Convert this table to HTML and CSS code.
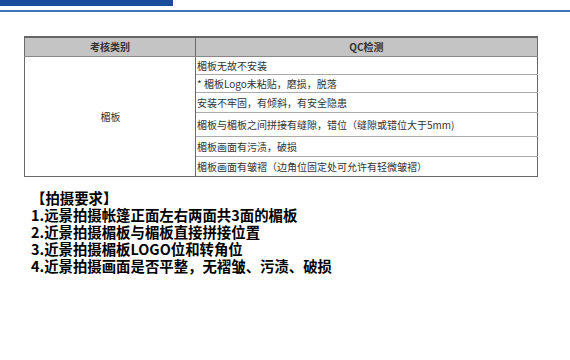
FILE: index.html
```html
<!DOCTYPE html>
<html lang="zh">
<head>
<meta charset="utf-8">
<link rel="stylesheet" href="styles.css">
</head>
<body>
<div class="top">
  <div class="bar"></div>
</div>
<div class="rule"></div>
<table class="qc">
  <thead>
    <tr><th class="c1">考核类别</th><th class="c2">QC检测</th></tr>
  </thead>
  <tbody>
    <tr class="r1"><td class="cat" rowspan="6">楣板</td><td>楣板无故不安装</td></tr>
    <tr class="r2"><td>* 楣板Logo未粘贴，磨损，脱落</td></tr>
    <tr class="r3"><td>安装不牢固，有倾斜，有安全隐患</td></tr>
    <tr class="r4"><td>楣板与楣板之间拼接有缝隙，错位（缝隙或错位大于5mm)</td></tr>
    <tr class="r5"><td>楣板画面有污渍，破损</td></tr>
    <tr class="r6"><td>楣板画面有皱褶（边角位固定处可允许有轻微皱褶）</td></tr>
  </tbody>
</table>
<div class="req">
  <p class="head">【拍摄要求】</p>
  <p>1.远景拍摄帐篷正面左右两面共3面的楣板</p>
  <p>2.近景拍摄楣板与楣板直接拼接位置</p>
  <p>3.近景拍摄楣板LOGO位和转角位</p>
  <p>4.近景拍摄画面是否平整，无褶皱、污渍、破损</p>
</div>
</body>
</html>
```
FILE: styles.css
```css
html, body {
  margin: 0;
  padding: 0;
  background: #fff;
  width: 570px;
  height: 360px;
  overflow: hidden;
  font-family: "Noto Sans CJK SC", "Noto Sans", sans-serif;
}
.top {
  height: 10px;
}
.bar {
  width: 173px;
  height: 6px;
  background: #1b4d9c;
}
.rule {
  height: 2px;
  background: #3f76b8;
}
.qc {
  margin: 24px 0 0 24px;
  width: 514px;
  border-collapse: collapse;
  border: 1px solid #6a6a6a;
  font-size: 10px;
  color: #333;
}
.qc th {
  height: 18px;
  padding: 0;
  background: #c4c4c4;
  border-top: 2px solid #666;
  border-bottom: 1px solid #888;
  font-weight: bold;
  color: #333;
  line-height: 18px;
}
.qc th.c1 {
  width: 170px;
  border-right: 1px solid #6a6a6a;
}
.qc td {
  padding: 0 0 0 1px;
  border-bottom: 1px solid #aaa;
  line-height: 14px;
  text-align: left;
}
.qc td.cat {
  text-align: center;
  border-right: 1px solid #6a6a6a;
  border-bottom: none;
}
.r1 td { height: 17px; }
.r2 td { height: 17px; }
.r3 td { height: 19px; }
.r4 td { height: 23px; }
.r5 td { height: 19px; }
.r6 td { height: 19px; border-bottom: none; }
.req {
  margin: 12px 0 0 31px;
  font-weight: bold;
  font-size: 14.4px;
  line-height: 17px;
  color: #000;
}
.req p {
  margin: 0;
}
.req .head {
  margin-left: 0;
}
```
